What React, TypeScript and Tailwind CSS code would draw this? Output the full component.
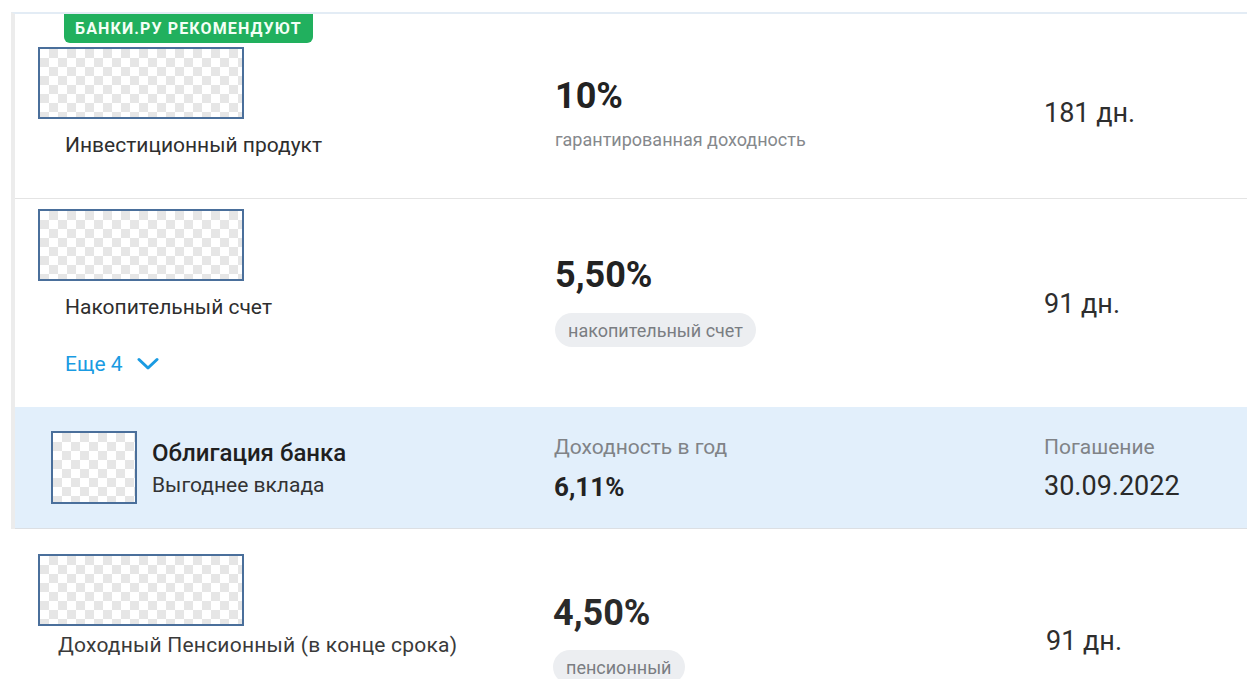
import React from "react";

const font = { fontFamily: "Roboto, 'Noto Sans', sans-serif" };

function Placeholder({ className }: { className: string }) {
  return (
    <div
      className={`border-2 border-[#4a6f9b] bg-white bg-[conic-gradient(#e6e6e6_25%,#ffffff_0_50%,#e6e6e6_0_75%,#ffffff_0)] bg-[length:18px_18px] ${className}`}
    />
  );
}

function Chevron() {
  return (
    <svg width="22" height="14" viewBox="0 0 22 14" fill="none" className="ml-[14px]">
      <path d="M2 2.5 L11 11 L20 2.5" stroke="#1a9be2" strokeWidth="3" strokeLinecap="round" strokeLinejoin="round" />
    </svg>
  );
}

function Chip({ children }: { children: React.ReactNode }) {
  return (
    <span className="inline-flex h-[34px] items-center rounded-full bg-[#eceef1] px-[13px] text-[18px] text-[#7a7d82]">
      {children}
    </span>
  );
}

export default function App() {
  return (
    <div className="min-h-[679px] w-[1247px] overflow-hidden bg-white text-[#2e2e2e]" style={font}>
      <div className="h-[12px]" />
      <div className="ml-[11px] border-l-4 border-t-2 border-l-[#ececec] border-t-[#e3ecf5]">
        {/* Investment product */}
        <div className="grid h-[185px] grid-cols-[540px_489px_1fr] border-b border-[#e4e4e4]">
          <div className="flex flex-col pl-[23px]">
            <div className="ml-[26px] flex h-[29px] w-[249px] items-center justify-center rounded-b-md bg-[#21b05e] text-[16px] font-bold tracking-[0.07em] text-[#f3fff6]">
              БАНКИ.РУ РЕКОМЕНДУЮТ
            </div>
            <Placeholder className="mt-[4px] h-[72px] w-[206px]" />
            <div className="ml-[27px] mt-[12px] text-[21px] leading-[28px]">Инвестиционный продукт</div>
          </div>
          <div className="pt-[64px]">
            <div className="text-[36px] font-bold leading-none text-[#222]">10%</div>
            <div className="mt-[13px] text-[18px] leading-[26px] text-[#85888c]">гарантированная доходность</div>
          </div>
          <div className="pt-[86px] text-[27px] leading-none">181 дн.</div>
        </div>

        {/* Savings account */}
        <div className="grid h-[208px] grid-cols-[540px_489px_1fr]">
          <div className="flex flex-col pl-[23px] pt-[10px]">
            <Placeholder className="h-[72px] w-[206px]" />
            <div className="ml-[27px] mt-[12px] text-[21px] leading-[28px]">Накопительный счет</div>
            <div className="ml-[27px] mt-[29px] flex items-center text-[21px] leading-[28px] text-[#1a9be2]">
              Еще 4
              <Chevron />
            </div>
          </div>
          <div className="pt-[58px]">
            <div className="text-[36px] font-bold leading-none text-[#222]">5,50%</div>
            <div className="mt-[20px]">
              <Chip>накопительный счет</Chip>
            </div>
          </div>
          <div className="pt-[92px] text-[27px] leading-none">91 дн.</div>
        </div>

        {/* Bank bond */}
        <div className="grid h-[122px] grid-cols-[539px_490px_1fr] items-center border-b border-[#dcdfe3] bg-[#e2effb]">
          <div className="flex items-center pl-[36px]">
            <Placeholder className="h-[73px] w-[86px]" />
            <div className="ml-[15px]">
              <div className="text-[24px] font-medium leading-[30px] text-[#1f1f1f]">Облигация банка</div>
              <div className="mt-[4px] text-[21px] leading-[26px] text-[#333]">Выгоднее вклада</div>
            </div>
          </div>
          <div>
            <div className="text-[21px] leading-[26px] text-[#808387]">Доходность в год</div>
            <div className="mt-[12px] text-[26px] font-bold leading-[30px] text-[#222]">6,11%</div>
          </div>
          <div>
            <div className="text-[21px] leading-[26px] text-[#808387]">Погашение</div>
            <div className="mt-[11px] text-[27px] leading-[30px] text-[#2a2a2a]">30.09.2022</div>
          </div>
        </div>
      </div>

      {/* Pension deposit */}
      <div className="grid h-[150px] grid-cols-[553px_493px_1fr]">
        <div className="flex flex-col pl-[38px] pt-[25px]">
          <Placeholder className="h-[72px] w-[206px]" />
          <div className="ml-[20px] mt-[5px] text-[21px] leading-[28px] tracking-[0.01em] text-[#3a3a3a]">
            Доходный Пенсионный (в конце срока)
          </div>
        </div>
        <div className="pt-[66px]">
          <div className="text-[36px] font-bold leading-none text-[#2a2a2a]">4,50%</div>
          <div className="mt-[19px]">
            <Chip>пенсионный</Chip>
          </div>
        </div>
        <div className="pt-[99px] text-[27px] leading-none">91 дн.</div>
      </div>
    </div>
  );
}
